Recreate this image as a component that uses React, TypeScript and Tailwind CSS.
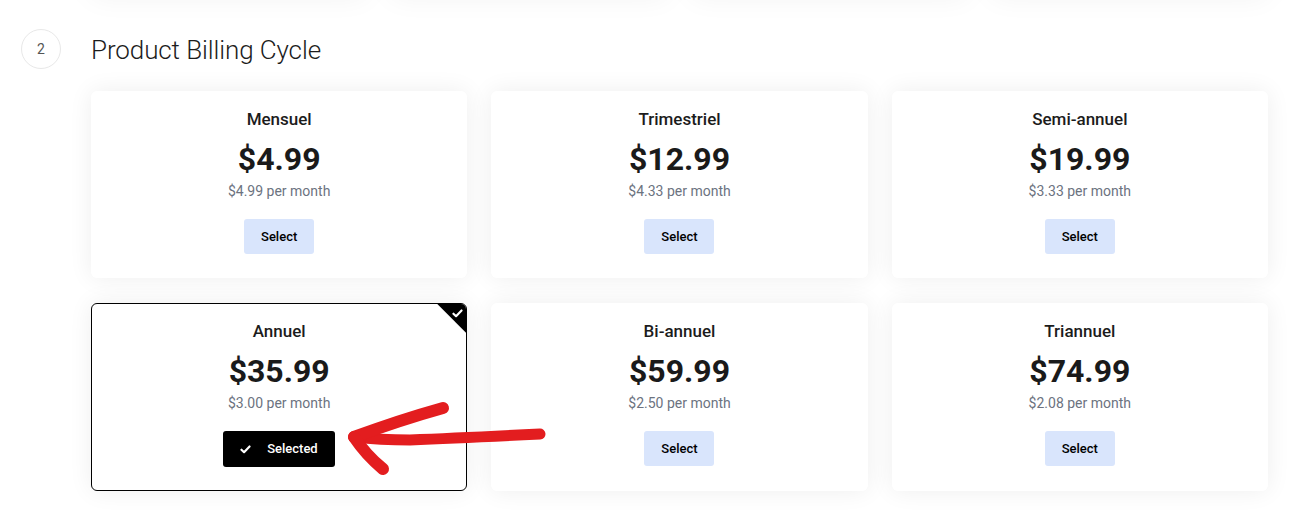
import React from "react";

type Plan = {
  name: string;
  price: string;
  monthly: string;
  selected?: boolean;
};

const plans: Plan[] = [
  { name: "Mensuel", price: "$4.99", monthly: "$4.99 per month" },
  { name: "Trimestriel", price: "$12.99", monthly: "$4.33 per month" },
  { name: "Semi-annuel", price: "$19.99", monthly: "$3.33 per month" },
  { name: "Annuel", price: "$35.99", monthly: "$3.00 per month", selected: true },
  { name: "Bi-annuel", price: "$59.99", monthly: "$2.50 per month" },
  { name: "Triannuel", price: "$74.99", monthly: "$2.08 per month" },
];

const CheckMark = ({ className }: { className?: string }) => (
  <svg viewBox="0 0 12 10" className={className} fill="none">
    <path
      d="M1.5 5.2 L4.4 8 L10.5 1.6"
      stroke="currentColor"
      strokeWidth="2.4"
      strokeLinecap="round"
      strokeLinejoin="round"
    />
  </svg>
);

const PlanCard = ({ plan }: { plan: Plan }) => (
  <div
    className={`relative overflow-hidden rounded-md bg-white text-center pt-[15px] pb-[23px] shadow-[0_0_24px_rgba(0,0,0,0.07)] border ${
      plan.selected ? "border-black" : "border-transparent"
    }`}
  >
    {plan.selected && (
      <div className="absolute top-0 right-0 w-[29px] h-[29px] [clip-path:polygon(0_0,100%_0,100%_100%)] bg-black">
        <CheckMark className="absolute top-[5px] right-[3px] w-[11px] h-[9px] text-white" />
      </div>
    )}
    <div className="text-[17px] leading-6 font-medium text-[#1c1c1c]">{plan.name}</div>
    <div className="mt-[8px] text-[32px] leading-10 font-bold text-[#1a1a1a]">{plan.price}</div>
    <div className="mt-[2px] text-[14px] leading-5 text-[#6c737f]">{plan.monthly}</div>
    <div className="mt-[18px] flex justify-center">
      {plan.selected ? (
        <button className="h-[36px] w-[112px] rounded-[3px] bg-black text-white text-[13px] font-medium flex items-center pl-[17px]">
          <CheckMark className="w-[11px] h-[9px] mr-[16px]" />
          Selected
        </button>
      ) : (
        <button className="h-[35px] w-[70px] rounded-[3px] bg-[#d9e5fc] text-black text-[13px] font-medium">
          Select
        </button>
      )}
    </div>
  </div>
);

export default function App() {
  return (
    <div
      className="relative h-[519px] w-full overflow-hidden bg-white"
      style={{ fontFamily: "Roboto, 'Liberation Sans', sans-serif" }}
    >
      {/* previous step's cards, only their shadows peek in */}
      <div className="ml-[91px] mr-[30px] -mt-[150px] h-[146px] grid grid-cols-4 gap-6">
        {[0, 1, 2, 3].map((i) => (
          <div key={i} className="rounded-md bg-white shadow-[0_0_30px_rgba(0,0,0,0.06)]" />
        ))}
      </div>

      <div className="flex pl-[21px] pr-[30px]">
        <div className="w-[70px] shrink-0">
          <div className="mt-[33px] w-[40px] h-[40px] rounded-full border border-[#e8e8e8] flex items-center justify-center text-[14px] text-[#555]">
            2
          </div>
        </div>
        <div className="flex-1">
          <h2 className="mt-[38px] h-8 text-[26px] leading-8 font-light text-[#1c1c1c] tracking-[-0.1px]">
            Product Billing Cycle
          </h2>
          <div className="mt-[25px] grid grid-cols-3 gap-x-6 gap-y-[25px]">
            {plans.map((p) => (
              <PlanCard key={p.name} plan={p} />
            ))}
          </div>
        </div>
      </div>

      <svg
        className="pointer-events-none absolute inset-0"
        width="1298"
        height="519"
        viewBox="0 0 1298 519"
        fill="none"
      >
        <g stroke="#e31d1f" strokeLinecap="round" strokeLinejoin="round">
          <path d="M540 434 Q460 438 410 440 Q380 440 354 437" strokeWidth="11" />
          <path d="M443 408 Q400 420 354 437" strokeWidth="12" />
          <path d="M354 437 Q366 455 383 469" strokeWidth="12" />
        </g>
      </svg>
    </div>
  );
}
